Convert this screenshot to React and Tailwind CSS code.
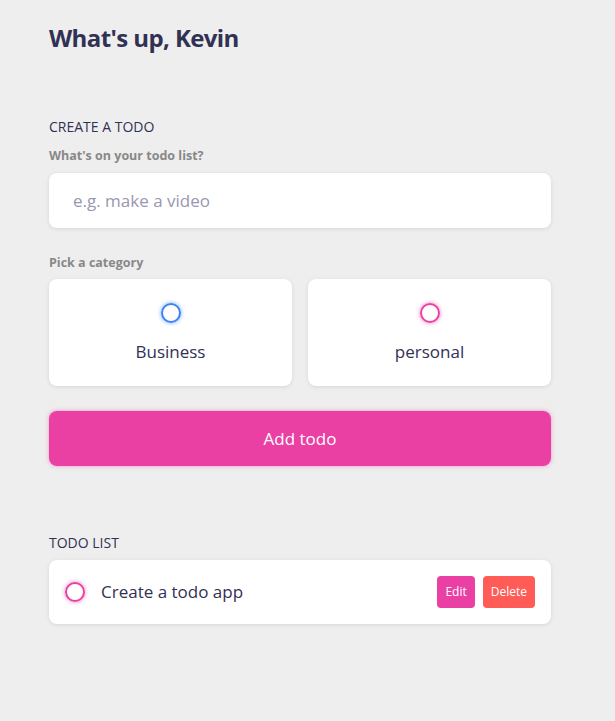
import React from "react";

export default function App() {
  return (
    <div className="min-h-screen bg-[#eeeeee] font-['Open_Sans','Noto_Sans',sans-serif] text-[#313154]">
      <div className="w-[502px] ml-[49px] pt-[22px]">
        <h1 className="text-[24px] font-bold leading-8 tracking-tight">What's up, Kevin</h1>

        <section className="mt-[63px]">
          <h3 className="text-[14px] leading-5 uppercase">Create a todo</h3>
          <h4 className="mt-[9px] text-[12.5px] font-bold leading-5 text-[#888888]">What's on your todo list?</h4>
          <input
            type="text"
            placeholder="e.g. make a video"
            className="mt-[7px] w-full h-[55px] rounded-lg bg-white px-6 text-[17px] shadow-[0_1px_4px_rgba(0,0,0,0.1)] outline-none placeholder:text-[#9a97b0]"
          />

          <h4 className="mt-[25px] text-[12.5px] font-bold leading-5 text-[#888888]">Pick a category</h4>
          <div className="mt-[6px] grid grid-cols-2 gap-4">
            <label className="h-[107px] rounded-lg bg-white shadow-[0_1px_4px_rgba(0,0,0,0.1)] flex flex-col items-center pt-6">
              <span className="w-5 h-5 rounded-full border-2 border-[#3a82f6] shadow-[0_0_4px_rgba(58,130,246,0.7)]" />
              <span className="mt-[17px] text-[17px] leading-6">Business</span>
            </label>
            <label className="h-[107px] rounded-lg bg-white shadow-[0_1px_4px_rgba(0,0,0,0.1)] flex flex-col items-center pt-6">
              <span className="w-5 h-5 rounded-full border-2 border-[#ea40a4] shadow-[0_0_4px_rgba(234,64,164,0.7)]" />
              <span className="mt-[17px] text-[17px] leading-6">personal</span>
            </label>
          </div>

          <button className="mt-[25px] w-full h-[55px] rounded-lg bg-[#ea40a4] text-white text-[17px] shadow-[0_0_4px_rgba(234,64,164,0.5)]">
            Add todo
          </button>
        </section>

        <section className="mt-[67px]">
          <h3 className="text-[14px] leading-5 uppercase">Todo list</h3>
          <div className="mt-[7px] h-[64px] rounded-lg bg-white shadow-[0_1px_4px_rgba(0,0,0,0.1)] flex items-center px-4">
            <span className="w-5 h-5 rounded-full border-2 border-[#ea40a4] shadow-[0_0_4px_rgba(234,64,164,0.7)]" />
            <span className="ml-4 flex-1 text-[17px]">Create a todo app</span>
            <div className="flex gap-2">
              <button className="h-8 px-2 rounded bg-[#ea40a4] text-white text-[12px]">Edit</button>
              <button className="h-8 px-2 rounded bg-[#ff5b57] text-white text-[12px]">Delete</button>
            </div>
          </div>
        </section>
      </div>
    </div>
  );
}
